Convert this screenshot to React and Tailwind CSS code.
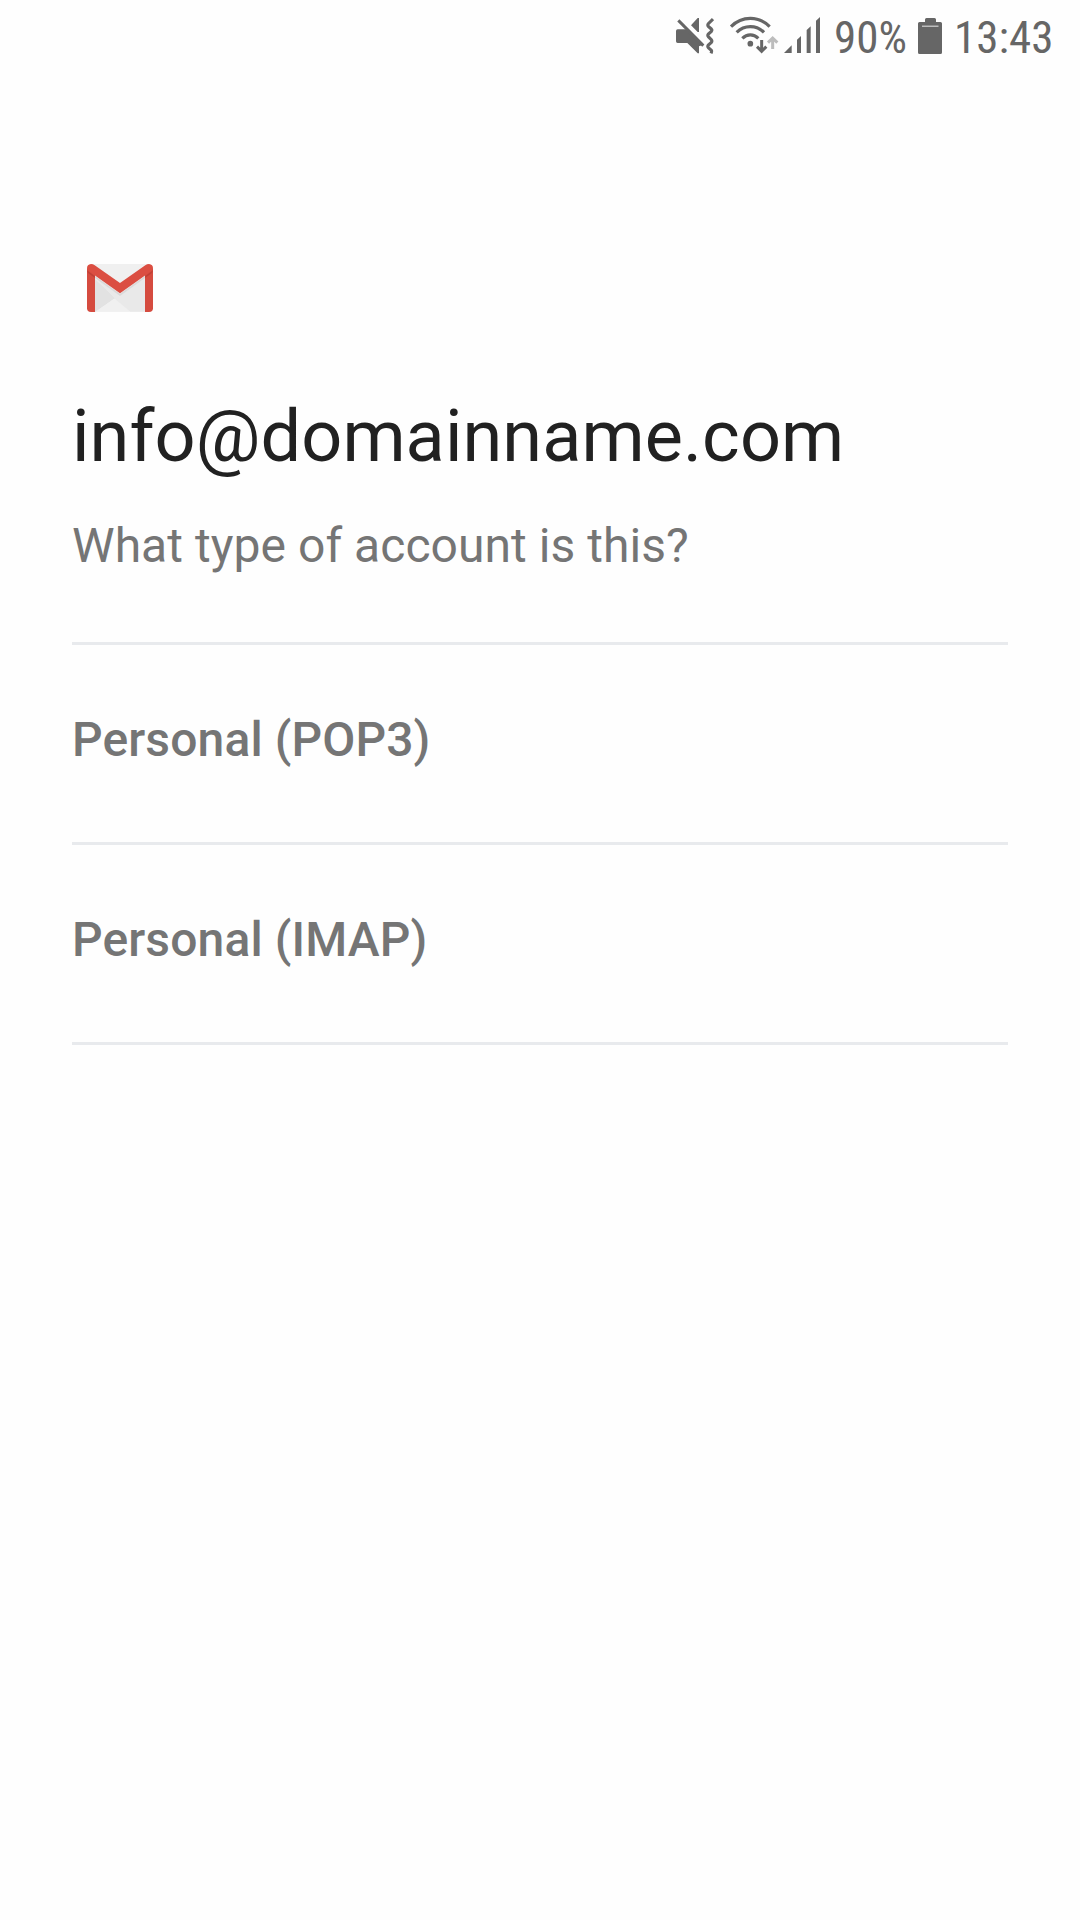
import React from "react";

const accountTypes = [
  { id: "pop3", label: "Personal (POP3)" },
  { id: "imap", label: "Personal (IMAP)" },
];

function MuteIcon() {
  return (
    <svg className="h-[38px] w-[38px]" viewBox="48 51 114 114" fill="none">
      <path d="M93 76L113 54H117V96H113Z" fill="#666" />
      <path d="M53 88H84L128 135L117 139V160H113L82 129H53Q48 129 48 124V93Q48 88 53 88Z" fill="#666" />
      <path d="M55 61L130 137" stroke="#666" strokeWidth="9" />
      <path
        d="M159 57L145 71Q142 75 145 79L154 87Q157 90 154 94L145 102Q142 106 145 110L154 119Q157 123 154 127L145 135Q142 139 145 143L154 151Q156 154 153 160"
        stroke="#666"
        strokeWidth="9.500"
      />
    </svg>
  );
}

function WifiIcon() {
  return (
    <svg className="ml-4 h-[38px] w-12" viewBox="210 51 144 114" fill="none" overflow="visible">
      <g stroke="#666" strokeWidth="9.500">
        <path d="M213 80C246 47 296 47 329 80" />
        <path d="M230 97C253 74 289 74 312 97" />
        <path d="M247 115C261 101 281 101 295 115" />
      </g>
      <circle cx="271" cy="131" r="8.500" fill="#666" />
      <path d="M305 120V154M291 140L305 154L319 140" stroke="#666" strokeWidth="9" />
      <path d="M338 147V114M324 128L338 114L352 128" stroke="#bdbdbd" strokeWidth="9" />
    </svg>
  );
}

function SignalIcon() {
  return (
    <svg className="ml-1.5 h-[38px] w-9" viewBox="373 51 108 114" fill="#666">
      <path d="M373 159L396 136V159Z" />
      <path d="M412 119L424 108V159H412Z" />
      <path d="M441 90L453 79V159H441Z" />
      <path d="M469 62L481 51V159H469Z" />
    </svg>
  );
}

function BatteryIcon() {
  return (
    <svg className="h-9 w-6" viewBox="0 0 24 36">
      <path d="M7 4V1.5Q7 0 8.5 0H16.500Q18 0 18 1.500V4H22.500Q24 4 24 5.500V34.500Q24 36 22.500 36H1.500Q0 36 0 34.500V5.500Q0 4 1.500 4Z" fill="#666" />
      <path d="M4 7.500H20.500V9H4Z" fill="#bdbdbd" />
    </svg>
  );
}

function GmailLogo() {
  return (
    <svg className="ml-[15px] h-12 w-[66px]" viewBox="51 42 198 144">
      <path d="M64 42H236L242 185H58Z" fill="#f0f0f0" />
      <path d="M75 88L136 145L75 185Z" fill="#e0e0e0" />
      <path d="M75 185L133 145L181 185Z" fill="#f0f0f0" />
      <path d="M75 84L133 145L181 185H225V84L150 138Z" fill="#e9e9e9" />
      <path d="M75 88L133 145L75 185Z" fill="#e2e2e2" />
      <path d="M75 78L150 131L225 78V84L150 138L75 84Z" fill="#dadada" />
      <path d="M51 54L75 70V186H63Q51 186 51 175Z" fill="#d54b3f" />
      <path d="M249 54L225 70V186H237Q249 186 249 175Z" fill="#d54b3f" />
      <path d="M51 61L75 79V84L54 69Z" fill="#c04036" />
      <path d="M249 61L225 79V84L246 69Z" fill="#c04036" />
      <path d="M63 42Q69 42 73 45L150 99L227 45Q231 42 237 42Q249 43 249 55Q249 60 243 64L150 130L57 64Q51 60 51 55Q51 43 63 42Z" fill="#db4e42" />
    </svg>
  );
}

function StatusBar() {
  return (
    <header className="flex h-[72px] items-center justify-end pr-7 text-[45px] leading-none text-[#666]">
      <MuteIcon />
      <WifiIcon />
      <SignalIcon />
      <span className="ml-3.5 w-[72px] whitespace-nowrap pt-[3px] font-['Roboto_Condensed',Roboto,sans-serif] [font-stretch:75%]">90%</span>
      <span className="ml-3">
        <BatteryIcon />
      </span>
      <span className="ml-3 w-[98px] whitespace-nowrap pt-[3px] font-['Roboto_Condensed',Roboto,sans-serif] [font-stretch:75%]">13:43</span>
    </header>
  );
}

export default function App() {
  return (
    <div className="min-h-screen w-full bg-[#fefefe] font-[Roboto,sans-serif]">
      <StatusBar />
      <main className="px-[72px] pt-48">
        <GmailLogo />
        <h1 className="mt-[83px] text-[72px] leading-[84px] tracking-[0.1px] text-[#212121]">info@domainname.com</h1>
        <p className="mt-[39px] text-5xl leading-[56px] tracking-[0.05px] text-[#757575]">What type of account is this?</p>
        <ul className="mt-[68px] border-t-[3px] border-[#e8eaed]">
          {accountTypes.map((type) => (
            <li key={type.id} className="border-b-[3px] border-[#e8eaed]">
              <button className="flex h-[197px] w-full items-center pb-2 text-left text-5xl font-medium tracking-[0.12px] text-[#757575]">
                {type.label}
              </button>
            </li>
          ))}
        </ul>
      </main>
    </div>
  );
}
